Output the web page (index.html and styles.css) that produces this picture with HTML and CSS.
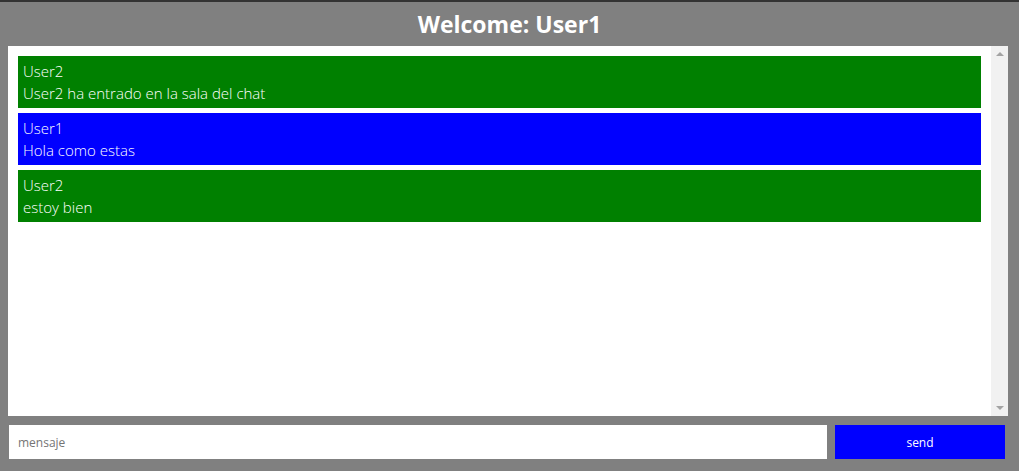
FILE: index.html
```html
<!DOCTYPE html>
<html lang="es">
<head>
<meta charset="utf-8">
<title>Chat</title>
<link rel="stylesheet" href="styles.css">
</head>
<body>
<div class="app">
  <h1 class="title">Welcome: User1</h1>
  <div class="chat">
    <div class="messages">
      <div class="msg other"><div>User2</div><div>User2 ha entrado en la sala del chat</div></div>
      <div class="msg mine"><div>User1</div><div>Hola como estas</div></div>
      <div class="msg other"><div>User2</div><div>estoy bien</div></div>
    </div>
    <div class="scrollbar">
      <span class="arrow up"></span>
      <span class="arrow down"></span>
    </div>
  </div>
  <div class="composer">
    <input class="input" type="text" placeholder="mensaje">
    <button class="send">send</button>
  </div>
</div>
</body>
</html>
```
FILE: styles.css
```css
html, body {
  margin: 0;
  padding: 0;
  height: 100%;
}
body {
  background: #808080;
  border-top: 2px solid #333333;
  box-sizing: border-box;
  font-family: "Open Sans", "Noto Sans", sans-serif;
  color: #ffffff;
}
.app {
  padding: 0 8px;
}
.title {
  margin: 0;
  height: 44px;
  line-height: 44px;
  text-align: center;
  font-size: 23px;
  font-weight: 700;
  color: #ffffff;
}
.chat {
  display: flex;
  height: 370px;
  width: 1000px;
  background: #ffffff;
}
.messages {
  flex: 1;
  padding: 10px 10px 0 10px;
  display: flex;
  flex-direction: column;
  gap: 5px;
}
.msg {
  height: 52px;
  box-sizing: border-box;
  padding: 4px 5px;
  font-size: 15px;
  line-height: 22px;
  font-weight: 300;
  color: #ffffff;
}
.other { background: #008000; }
.mine { background: #0000ff; }
.scrollbar {
  width: 17px;
  background: #f1f1f1;
  display: flex;
  flex-direction: column;
  justify-content: space-between;
  align-items: center;
  padding: 6px 0;
  box-sizing: border-box;
}
.arrow {
  width: 0;
  height: 0;
  border-left: 4px solid transparent;
  border-right: 4px solid transparent;
}
.arrow.up { border-bottom: 4px solid #a3a3a3; }
.arrow.down { border-top: 4px solid #a3a3a3; }
.composer {
  display: flex;
  gap: 8px;
  margin-top: 9px;
  padding-left: 1px;
}
.input {
  width: 818px;
  height: 34px;
  box-sizing: border-box;
  border: none;
  outline: none;
  padding: 0 9px;
  font-family: "Open Sans", "Noto Sans", sans-serif;
  font-size: 12px;
  color: #333;
  background: #ffffff;
}
.input::placeholder { color: #757575; }
.send {
  width: 170px;
  height: 34px;
  border: none;
  background: #0000ff;
  color: #ffffff;
  font-family: "Open Sans", "Noto Sans", sans-serif;
  font-size: 12px;
}
```
